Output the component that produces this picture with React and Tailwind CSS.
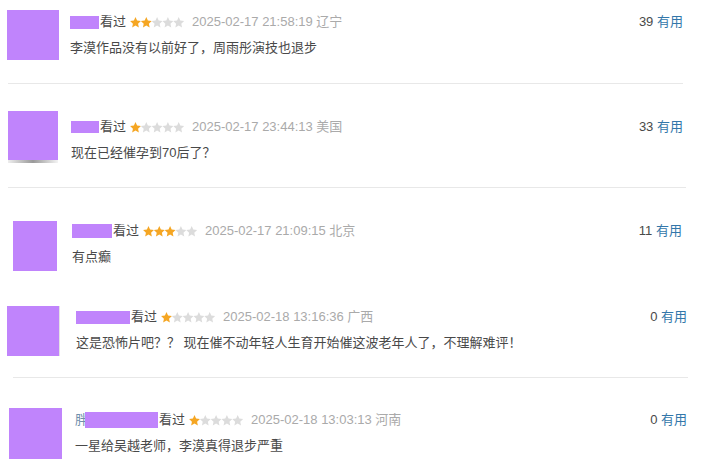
const STAR = "5.5,0.1 7.09,3.62 10.92,4.04 8.07,6.63 8.85,10.41 5.5,8.5 2.15,10.41 2.93,6.63 0.08,4.04 3.91,3.62";

function Stars({ n }) {
  return (
    <svg width="55" height="11" viewBox="0 0 55 11" className="shrink-0">
      {[0, 1, 2, 3, 4].map((i) => (
        <polygon
          key={i}
          points={STAR}
          transform={`translate(${i * 10.8} 0)`}
          fill={i < n ? "#f5a623" : "#dcdcdc"}
        />
      ))}
    </svg>
  );
}

const REVIEWS = [
  {
    section: "h-[83px] pt-[10px]",
    avatar: "ml-[7px] w-[52px] h-[50px]",
    content: "ml-[11px] mt-[2px] pr-[19px]",
    name: <span className="w-[29px] h-[13px] bg-[#c084fc]" />,
    stars: 2,
    date: "2025-02-17 21:58:19 辽宁",
    votes: 39,
    text: "李漠作品没有以前好了，周雨彤演技也退步",
    divider: "ml-[8px] w-[675px]",
  },
  {
    section: "h-[103px] pt-[27px]",
    avatar: "ml-[8px] w-[50px] h-[52px]",
    content: "ml-[13px] mt-[6px] pr-[19px]",
    name: <span className="w-[28px] h-[12px] bg-[#c084fc]" />,
    stars: 1,
    date: "2025-02-17 23:44:13 美国",
    votes: 33,
    text: "现在已经催孕到70后了？",
    divider: "ml-[8px] w-[678px]",
    strip: true,
  },
  {
    section: "h-[112px] pt-[33px]",
    avatar: "ml-[13px] w-[44px] h-[50px]",
    content: "ml-[15px] pr-[20px]",
    name: <span className="w-[40px] h-[14px] bg-[#c084fc]" />,
    stars: 3,
    date: "2025-02-17 21:09:15 北京",
    votes: 11,
    text: "有点癫",
  },
  {
    section: "h-[77px] pt-[6px]",
    avatar: "ml-[7px] w-[53px] h-[50px] border-r border-[#e4e4e4]",
    content: "ml-[16px] mt-[1px] pr-[15px]",
    name: <span className="w-[54px] h-[13px] bg-[#c084fc]" />,
    stars: 1,
    date: "2025-02-18 13:16:36 广西",
    votes: 0,
    text: "这是恐怖片吧？？ 现在催不动年轻人生育开始催这波老年人了，不理解难评！",
    divider: "ml-[13px] w-[675px]",
  },
  {
    section: "pt-[30px]",
    avatar: "ml-[9px] w-[53px] h-[51px]",
    content: "ml-[13px] mt-[2px] pr-[15px]",
    name: (
      <>
        <span className="text-[#6f8fab]">胖</span>
        <span className="relative -ml-[3px] w-[73px] h-[16px] bg-[#c084fc]" />
      </>
    ),
    stars: 1,
    date: "2025-02-18 13:03:13 河南",
    votes: 0,
    text: "一星给吴越老师，李漠真得退步严重",
  },
];

function Review({ r }) {
  return (
    <>
      <div className={`flex items-start ${r.section}`}>
        <div className={`shrink-0 flex flex-col bg-[#c084fc] ${r.avatar}`}>
          {r.strip && (
            <div className="mt-auto h-[3px] bg-gradient-to-r from-[#eeeeee] via-[#9a9a9a] to-[#f4f4f4]" />
          )}
        </div>
        <div className={`flex-1 flex flex-col ${r.content}`}>
          <div className="flex items-center h-[20px] text-[13px]">
            <div className="flex items-center">
              {r.name}
              <span className="ml-px text-[#494949]">看过</span>
              <span className="ml-[4px] flex items-center">
                <Stars n={r.stars} />
              </span>
              <span className="ml-[7px] text-[#aaa]">{r.date}</span>
            </div>
            <div className="ml-auto whitespace-nowrap">
              <span className="text-[#494949]">{r.votes}</span>{" "}
              <span className="text-[#37a]">有用</span>
            </div>
          </div>
          <div className="mt-[6px] h-[20px] leading-[20px] text-[13px] text-[#494949] whitespace-nowrap">
            {r.text}
          </div>
        </div>
      </div>
      {r.divider && <div className={`h-px bg-[#e8e8e8] ${r.divider}`} />}
    </>
  );
}

export default function App() {
  return (
    <div
      className="w-[702px] h-[468px] overflow-hidden bg-white"
      style={{ fontFamily: '"Liberation Sans", "Noto Sans CJK SC", sans-serif' }}
    >
      {REVIEWS.map((r, i) => (
        <Review key={i} r={r} />
      ))}
    </div>
  );
}
